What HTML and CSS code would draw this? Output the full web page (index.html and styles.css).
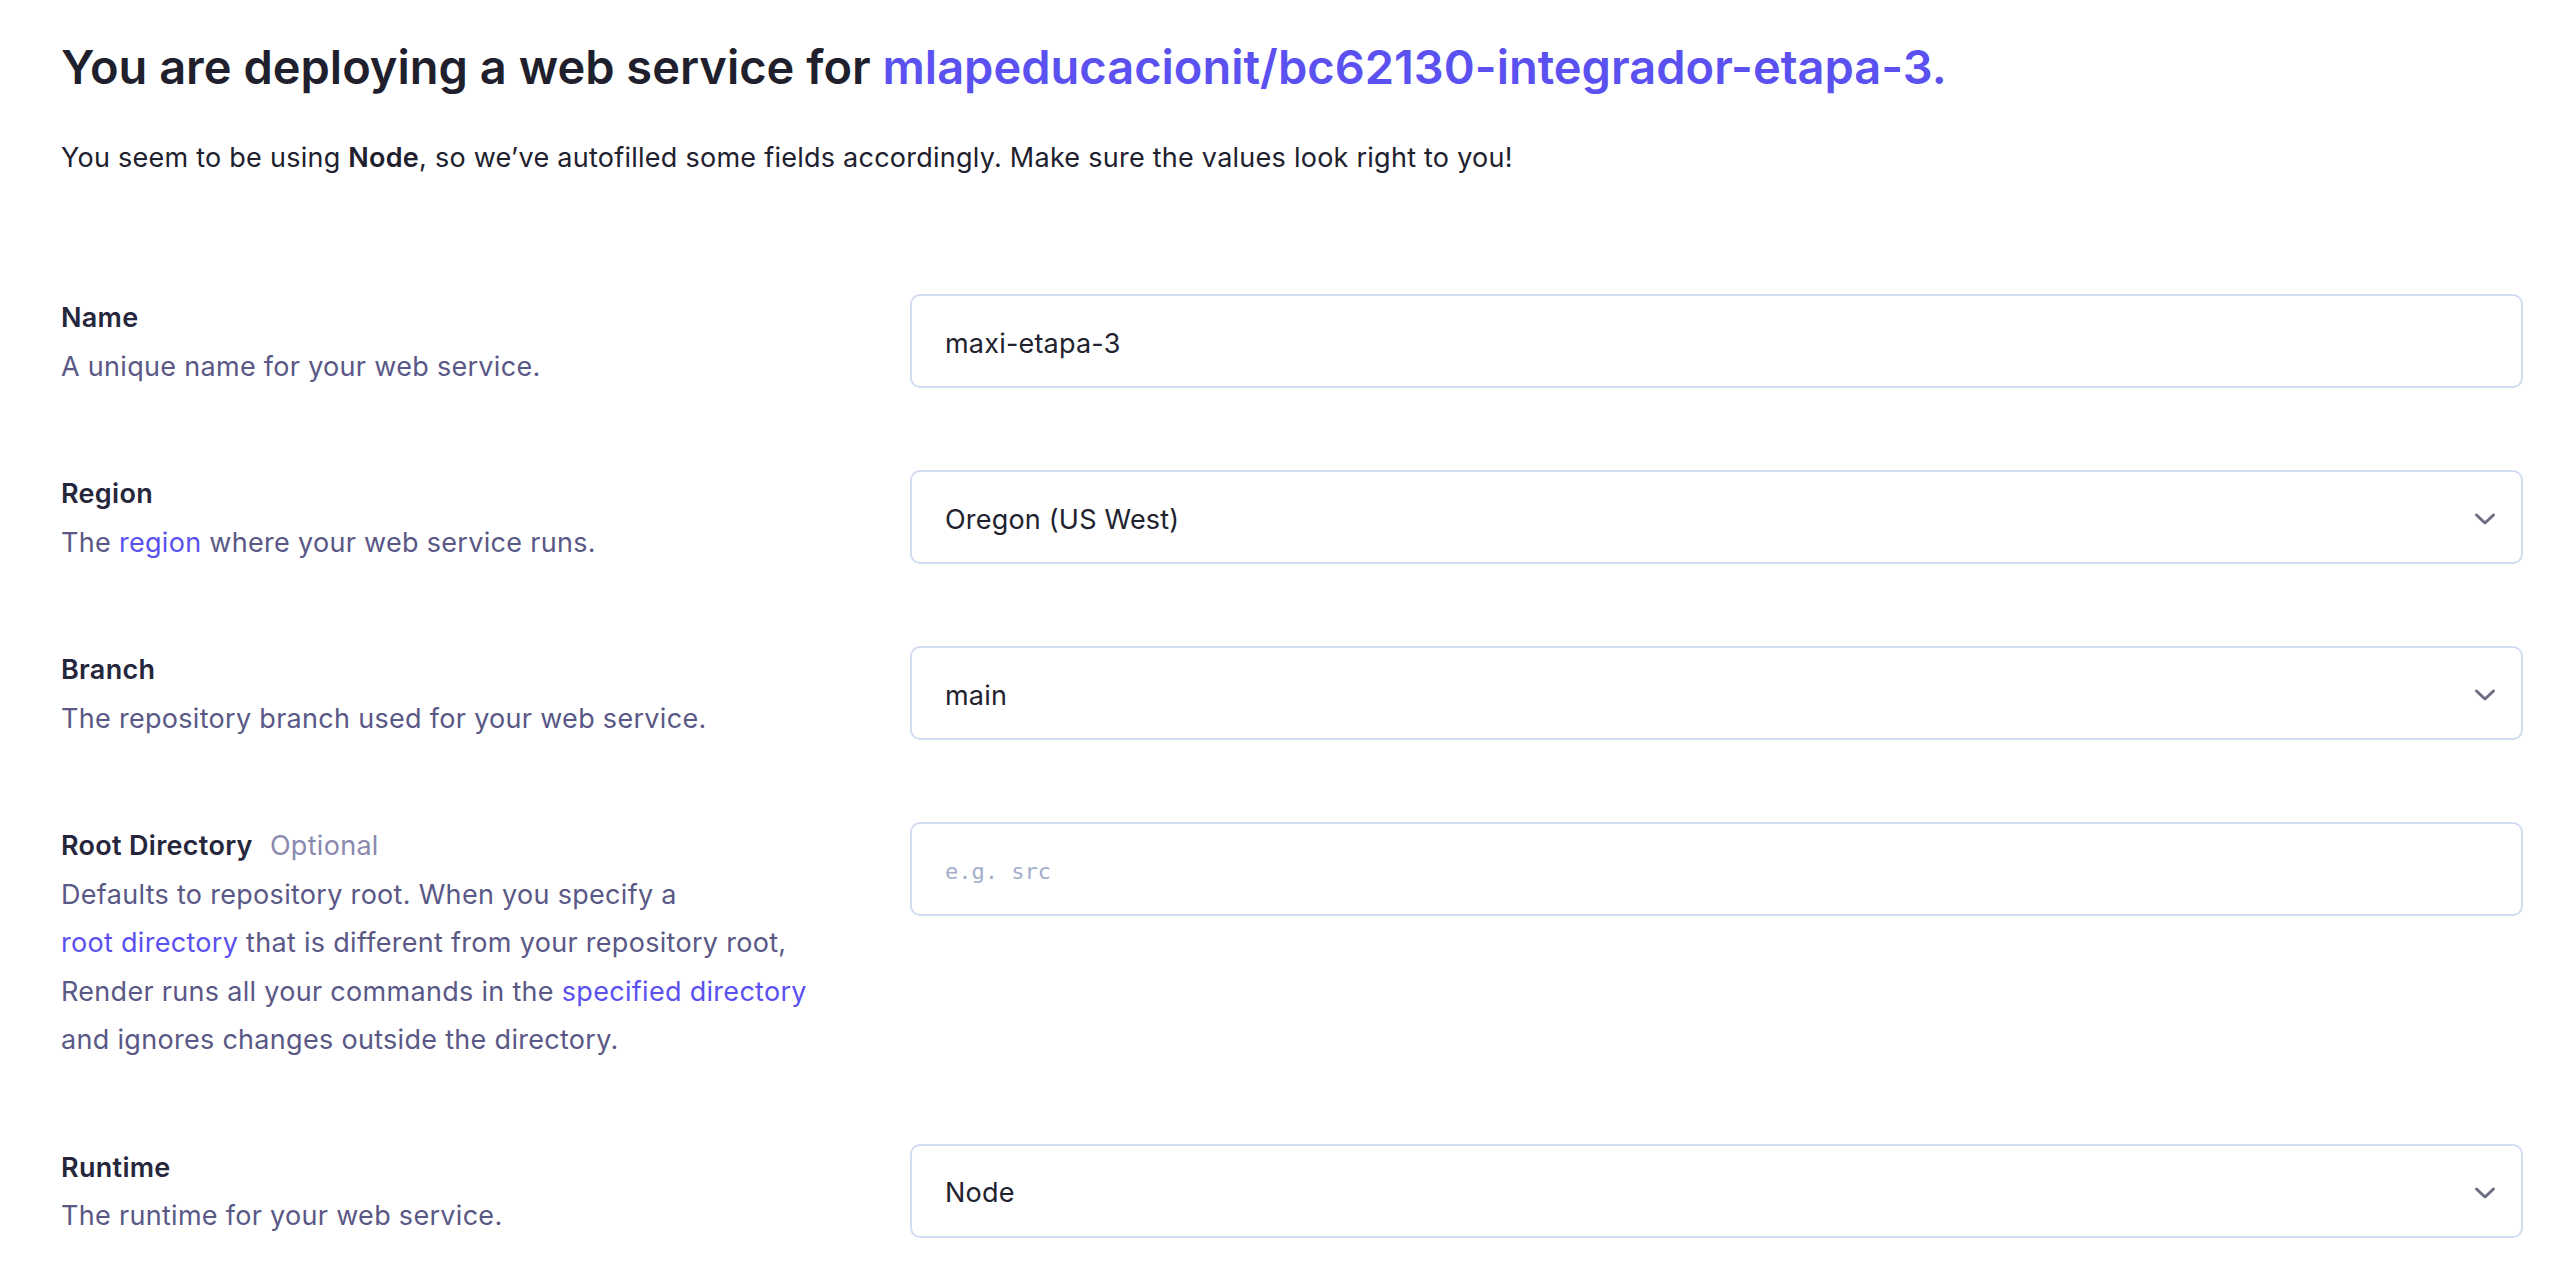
FILE: index.html
```html
<!DOCTYPE html>
<html lang="en">
<head>
<meta charset="utf-8">
<title>Deploy web service</title>
<link rel="stylesheet" href="styles.css">
</head>
<body>
<main class="page">
  <h1 class="title">You are deploying a web service for <span class="repo">mlapeducacionit/bc62130-integrador-etapa-3.</span></h1>
  <p class="intro">You seem to be using <strong>Node</strong>, so we’ve autofilled some fields accordingly. Make sure the values look right to you!</p>

  <div class="form">
    <div class="row">
      <div class="meta">
        <div class="label">Name</div>
        <div class="desc">A unique name for your web service.</div>
      </div>
      <div class="control">
        <div class="field">maxi-etapa-3</div>
      </div>
    </div>

    <div class="row">
      <div class="meta">
        <div class="label">Region</div>
        <div class="desc">The <a href="#">region</a> where your web service runs.</div>
      </div>
      <div class="control">
        <div class="field select"><span>Oregon (US West)</span>
          <svg class="chev" width="22" height="14" viewBox="0 0 22 14"><path d="M2.5 3 L11 11 L19.5 3" fill="none" stroke="#6b6e80" stroke-width="3" stroke-linecap="round" stroke-linejoin="round"/></svg>
        </div>
      </div>
    </div>

    <div class="row">
      <div class="meta">
        <div class="label">Branch</div>
        <div class="desc">The repository branch used for your web service.</div>
      </div>
      <div class="control">
        <div class="field select"><span>main</span>
          <svg class="chev" width="22" height="14" viewBox="0 0 22 14"><path d="M2.5 3 L11 11 L19.5 3" fill="none" stroke="#6b6e80" stroke-width="3" stroke-linecap="round" stroke-linejoin="round"/></svg>
        </div>
      </div>
    </div>

    <div class="row">
      <div class="meta">
        <div class="label">Root Directory <span class="optional">Optional</span></div>
        <div class="desc">Defaults to repository root. When you specify a <a href="#">root directory</a> that is different from your repository root, Render runs all your commands in the <a href="#">specified directory</a> and ignores changes outside the directory.</div>
      </div>
      <div class="control">
        <div class="field"><span class="placeholder">e.g. src</span></div>
      </div>
    </div>

    <div class="row">
      <div class="meta">
        <div class="label">Runtime</div>
        <div class="desc">The runtime for your web service.</div>
      </div>
      <div class="control">
        <div class="field select"><span>Node</span>
          <svg class="chev" width="22" height="14" viewBox="0 0 22 14"><path d="M2.5 3 L11 11 L19.5 3" fill="none" stroke="#6b6e80" stroke-width="3" stroke-linecap="round" stroke-linejoin="round"/></svg>
        </div>
      </div>
    </div>
  </div>
</main>
</body>
</html>
```

FILE: styles.css
```css
html, body {
  margin: 0;
  padding: 0;
  background: #ffffff;
}

body {
  font-family: Inter, "Noto Sans", sans-serif;
  color: #20202e;
}

.page {
  padding: 39px 51px 0 61px;
}

.title {
  margin: 0;
  font-size: 47px;
  line-height: 56px;
  font-weight: 600;
  color: #1f1f2d;
}

.repo {
  color: #5b50f0;
}

.intro {
  margin: 39px 0 0;
  font-size: 27px;
  letter-spacing: 0.25px;
  line-height: 48px;
  color: #20202e;
}

.intro strong {
  font-weight: 600;
}

.form {
  margin-top: 112px;
  display: flex;
  flex-direction: column;
  gap: 79px;
}

.row {
  display: flex;
  align-items: flex-start;
  gap: 69px;
}

.meta {
  width: 780px;
  flex: none;
  font-size: 27px;
  letter-spacing: 0.3px;
  line-height: 48.5px;
}

.label {
  font-weight: 600;
  color: #26263c;
}

.optional {
  font-weight: 400;
  color: #8a89ae;
  margin-left: 10px;
}

.desc {
  color: #5a5886;
}

.desc a {
  color: #5b50f0;
  text-decoration: none;
  white-space: nowrap;
}

.control {
  flex: 1;
  min-width: 0;
}

.field {
  box-sizing: border-box;
  height: 94px;
  border: 2px solid #d2ddf1;
  border-radius: 10px;
  padding: 4px 25px 0 33px;
  display: flex;
  align-items: center;
  justify-content: space-between;
  font-size: 27px;
  letter-spacing: 0.2px;
  color: #22222f;
  background: #fff;
}

.placeholder {
  font-family: "DejaVu Sans Mono", "Liberation Mono", monospace;
  font-size: 22px;
  letter-spacing: 0;
  color: #a3aecb;
}

.chev {
  flex: none;
}
```
